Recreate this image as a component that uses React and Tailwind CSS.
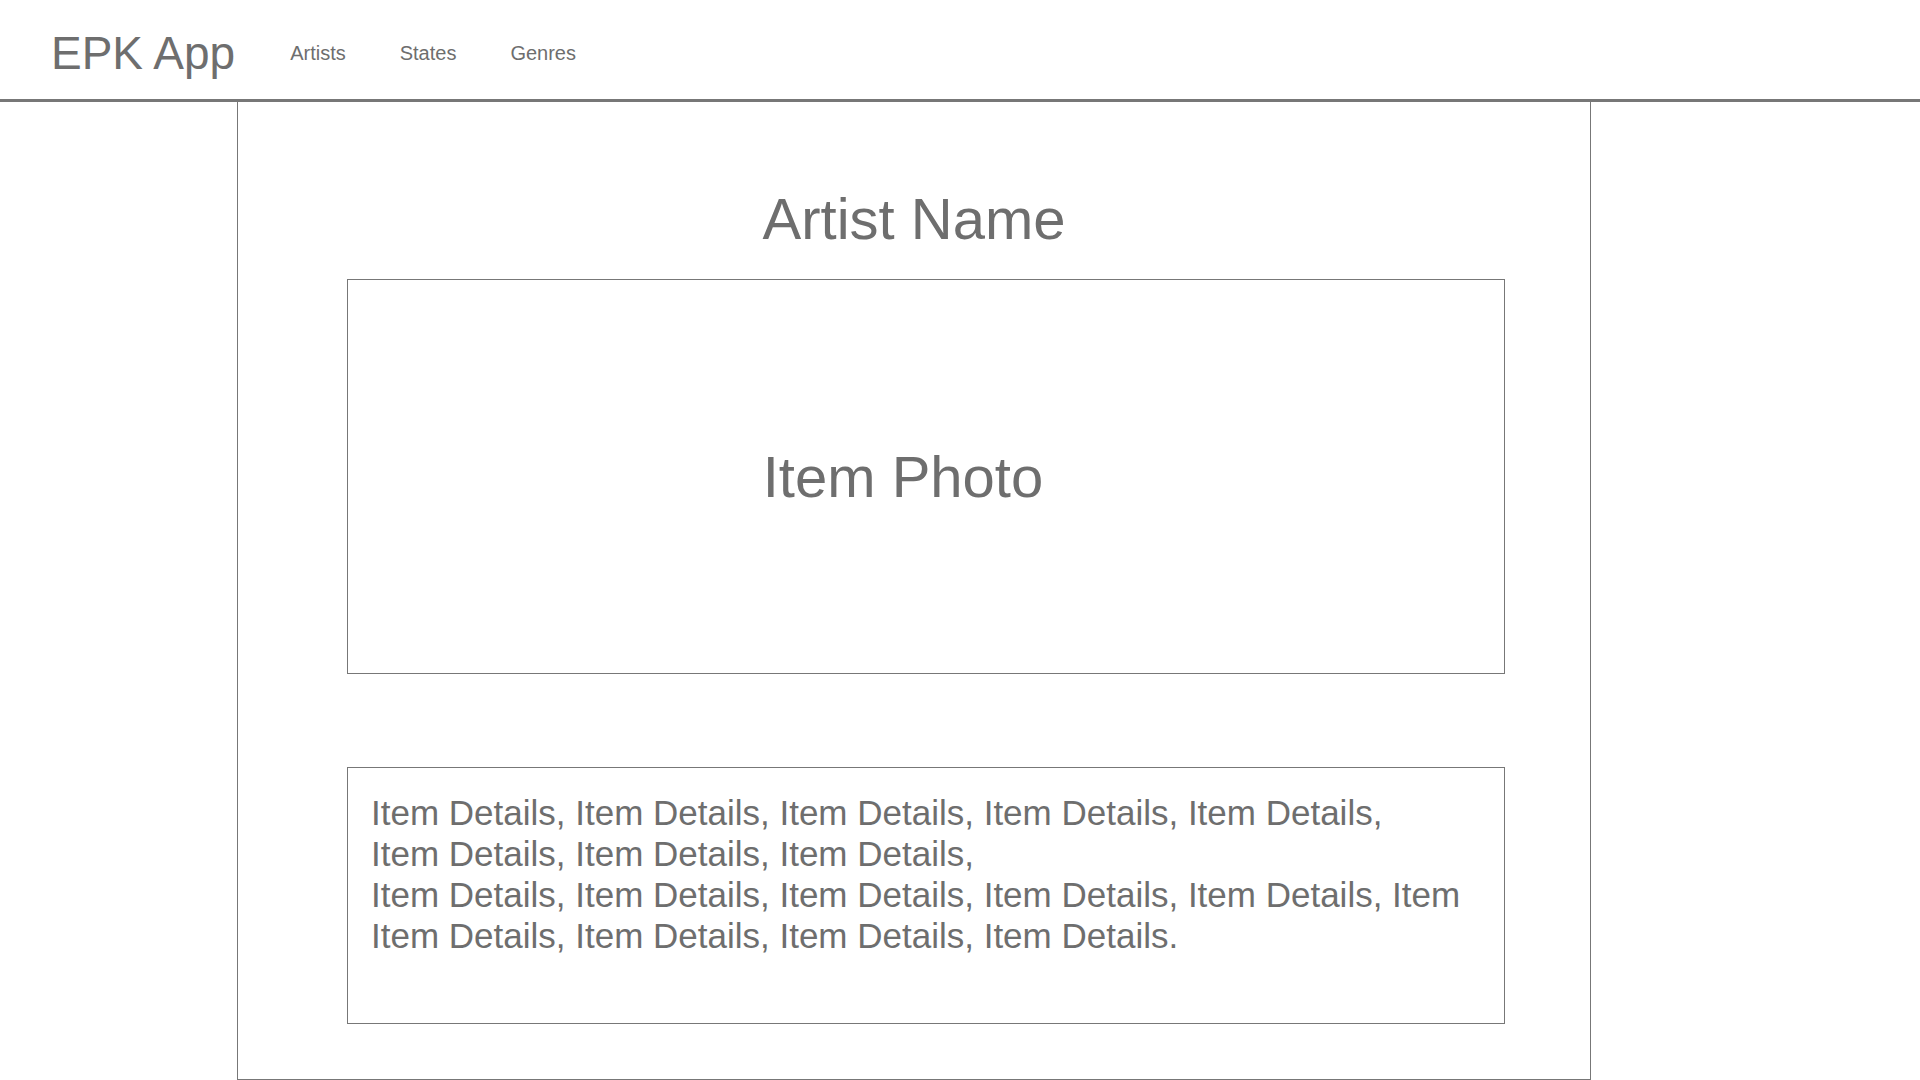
export default function App() {
  const navLinks = ["Artists", "States", "Genres"];

  const detailLines = [
    "Item Details, Item Details, Item Details, Item Details, Item Details,",
    "Item Details, Item Details, Item Details,",
    "Item Details, Item Details, Item Details, Item Details, Item Details, Item",
    "Item Details, Item Details, Item Details, Item Details.",
  ];

  return (
    <div className="min-h-screen bg-white text-[#707070] font-['Liberation_Sans',Arial,sans-serif] overflow-hidden">
      {/* Header */}
      <header className="h-[102px] flex items-start border-b-[3px] border-[#777777]">
        <a href="#" className="ml-[51px] mt-[30px] text-[46px] leading-none text-[#6e6e6e]">
          EPK App
        </a>
        <nav className="flex gap-[54px] ml-[55px] mt-[43px]">
          {navLinks.map((link) => (
            <a key={link} href="#" className="text-[20px] leading-none text-[#6e6e6e]">
              {link}
            </a>
          ))}
        </nav>
      </header>

      {/* Main card */}
      <main className="ml-[237px] w-[1354px] h-[978px] border-x border-b border-[#777777] flex flex-col pt-[88px]">
        <h1 className="text-center text-[58px] leading-none text-[#6e6e6e]">Artist Name</h1>

        {/* Photo */}
        <div className="ml-[109px] mt-[31px] w-[1158px] h-[395px] border border-[#777777] flex items-center justify-center pr-[46px]">
          <span className="text-[58px] leading-none text-[#6e6e6e]">Item Photo</span>
        </div>

        {/* Details */}
        <div className="ml-[109px] mt-[93px] w-[1158px] h-[257px] border border-[#777777] pl-[23px] pt-[24px]">
          {detailLines.map((line, i) => (
            <p key={i} className="text-[35px] leading-[41px] whitespace-nowrap text-[#6e6e6e]">
              {line}
            </p>
          ))}
        </div>
      </main>
    </div>
  );
}
